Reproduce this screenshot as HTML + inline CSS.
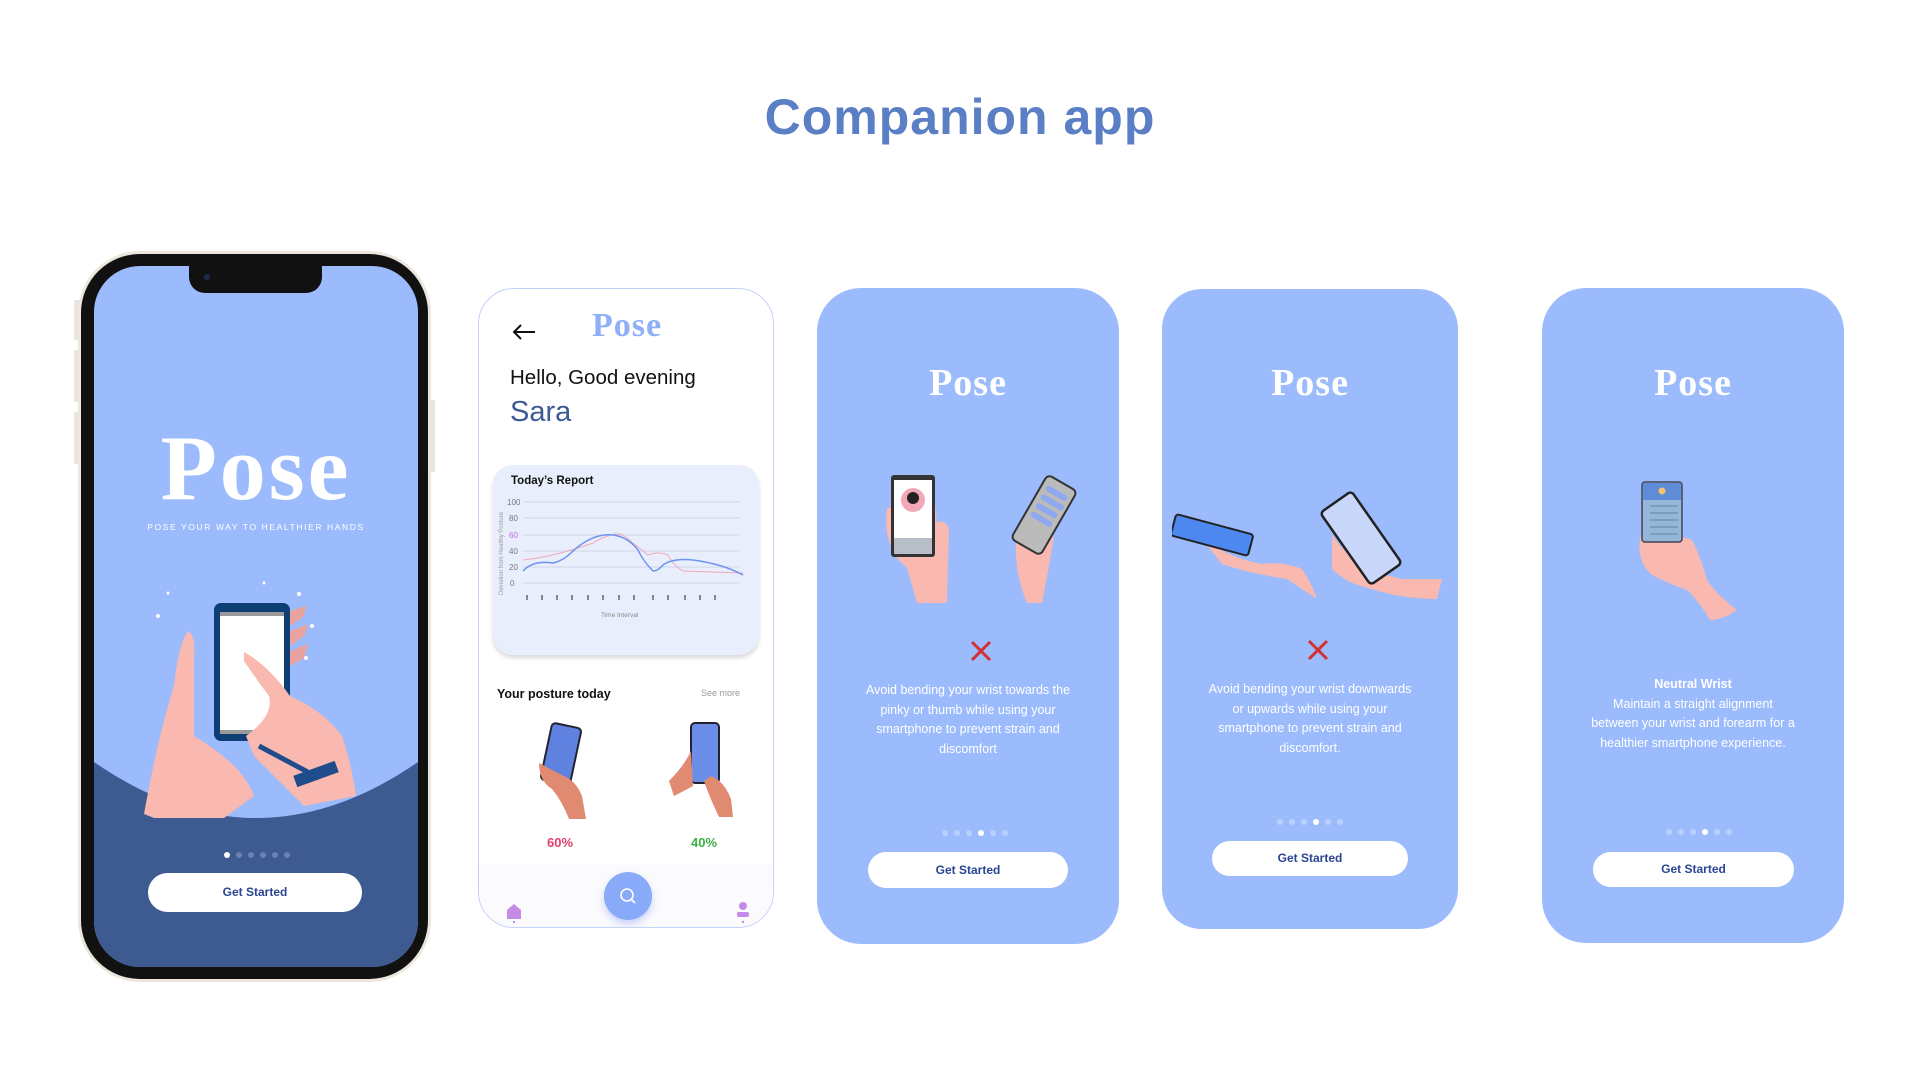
<!DOCTYPE html>
<html><head><meta charset="utf-8"><style>
*{margin:0;padding:0;box-sizing:border-box}
html,body{width:1920px;height:1080px;overflow:hidden}
body{background:#fff;position:relative;font-family:"Liberation Sans",sans-serif}
.a{position:absolute}
.logo{font-family:"Liberation Serif",serif;font-weight:bold;color:#fff;text-align:center;letter-spacing:1px}
.card{position:absolute;background:#9bbbfc;border-radius:44px;overflow:hidden}
.btn{position:absolute;background:#fff;border-radius:20px;color:#2a4593;font-weight:bold;font-size:12px;text-align:center}
.txt{position:absolute;color:#fff;text-align:center;font-size:12.5px;line-height:19.5px;white-space:nowrap}
.dots{position:absolute;display:flex;gap:6px}
.dots i{width:6px;height:6px;border-radius:50%;background:#b9cffd;display:block}
.dots i.on{background:#fff}
</style></head><body>
<div class="a" style="left:0;top:88px;width:1920px;text-align:center;font-size:50px;font-weight:bold;color:#5b7fc4;letter-spacing:1px">Companion app</div>

<!-- Phone 1 -->
<div class="a" style="left:74px;top:300px;width:6px;height:40px;background:#e9e4dc;border-radius:2px"></div>
<div class="a" style="left:74px;top:350px;width:6px;height:52px;background:#e9e4dc;border-radius:2px"></div>
<div class="a" style="left:74px;top:412px;width:6px;height:52px;background:#e9e4dc;border-radius:2px"></div>
<div class="a" style="left:429px;top:400px;width:6px;height:72px;background:#e9e4dc;border-radius:2px"></div>
<div class="a" style="left:78px;top:251px;width:353px;height:731px;border-radius:62px;background:#111;border:3px solid #ece6dc"></div>
<div class="a" style="left:94px;top:266px;width:324px;height:701px;border-radius:46px;background:#9bbbfc;overflow:hidden">
  <svg class="a" style="left:0;top:0" width="324" height="701">
    <path d="M0 496 Q162 608 324 496 L324 701 L0 701 Z" fill="#3d5b90"/>
    <path d="M50 548 Q64 470 80 420 Q84 380 94 365 Q102 370 100 392 L100 470 Q150 500 160 530 L130 552 L60 552 Z" fill="#f9b8b0"/>
    <rect x="120" y="337" width="76" height="138" rx="7" fill="#0d3f75"/>
    <rect x="126" y="348" width="64" height="118" fill="#fff"/>
    <rect x="126" y="346" width="64" height="4" fill="#999"/>
    <rect x="126" y="464" width="64" height="4" fill="#999"/>
    <path d="M196 345 L212 340 L210 350 L196 360 M196 365 L214 358 L210 370 L196 380 M196 385 L214 378 L210 392 L196 400" fill="#e8a3a0"/>
    <path d="M150 386 Q175 400 196 430 Q230 445 248 470 Q258 500 262 530 L210 540 Q180 510 160 490 L152 470 Q180 450 175 430 Q160 410 150 395 Z" fill="#f9b8b0"/>
    <path d="M165 480 L225 512" stroke="#1f4c8a" stroke-width="5"/>
    <rect x="200" y="502" width="44" height="12" fill="#1f4c8a" transform="rotate(-20 222 508)"/>
    <g fill="#fff"><circle cx="64" cy="350" r="2"/><circle cx="170" cy="317" r="1.5"/><circle cx="205" cy="328" r="2"/><circle cx="218" cy="360" r="2"/><circle cx="74" cy="327" r="1.5"/><circle cx="212" cy="392" r="2"/></g>
  </svg>
  <div class="a logo" style="left:0;top:152px;width:324px;font-size:92px;line-height:100px;letter-spacing:3px">Pose</div>
  <div class="a" style="left:0;top:256px;width:324px;text-align:center;color:#fff;font-size:8.5px;letter-spacing:1.6px">POSE YOUR WAY TO HEALTHIER HANDS</div>
  <div class="dots" style="left:130px;top:586px"><i class="on"></i><i style="background:#6a82b3"></i><i style="background:#6a82b3"></i><i style="background:#6a82b3"></i><i style="background:#6a82b3"></i><i style="background:#6a82b3"></i></div>
  <div class="btn" style="left:54px;top:607px;width:214px;height:39px;line-height:39px;border-radius:20px">Get Started</div>
</div>
<div class="a" style="left:189px;top:264px;width:133px;height:29px;background:#111;border-radius:0 0 16px 16px"></div>
<div class="a" style="left:204px;top:274px;width:6px;height:6px;border-radius:50%;background:#1c2c4c"></div>

<!-- Card 2 -->
<div class="a" style="left:478px;top:288px;width:296px;height:640px;border:1.5px solid #c3d3f7;border-radius:36px;background:#fff;overflow:hidden">
  <svg class="a" style="left:32px;top:34px" width="26" height="18"><path d="M24 9 H3 M10 2 L3 9 L10 16" stroke="#111" stroke-width="2" fill="none"/></svg>
  <div class="a logo" style="left:0;top:18px;width:296px;font-size:34px;color:#8fb0f8">Pose</div>
  <div class="a" style="left:31px;top:77px;font-size:20.5px;color:#111">Hello, Good evening</div>
  <div class="a" style="left:31px;top:107px;font-size:29px;color:#3d5a94">Sara</div>
  <div class="a" style="left:14px;top:176px;width:266px;height:190px;background:#e9eefc;border-radius:20px;box-shadow:0 3px 4px rgba(0,0,0,.15)">
    <div class="a" style="left:18px;top:10px;font-size:11.5px;font-weight:bold;color:#111">Today’s Report</div>
    <svg class="a" style="left:0;top:0" width="266" height="190">
      <g stroke="#cfd6e6" stroke-width="1"><line x1="30" y1="37" x2="246" y2="37"/><line x1="30" y1="53" x2="246" y2="53"/><line x1="30" y1="70" x2="246" y2="70"/><line x1="30" y1="86" x2="246" y2="86"/><line x1="30" y1="102" x2="246" y2="102"/><line x1="30" y1="118" x2="246" y2="118"/></g>
      <g font-size="8" fill="#777" font-family="Liberation Sans"><text x="14" y="40">100</text><text x="16" y="56">80</text><text x="16" y="73" fill="#c06ad8">60</text><text x="16" y="89">40</text><text x="16" y="105">20</text><text x="17" y="121">0</text></g>
      <path d="M30 95 Q60 92 100 78 Q120 66 130 70 Q140 78 155 90 Q165 86 175 90 Q182 102 190 106 L250 108" stroke="#f2a9b6" fill="none" stroke-width="1"/>
      <path d="M30 106 Q40 95 60 98 Q70 96 80 86 Q100 68 120 70 Q135 72 145 85 Q150 96 160 106 Q165 106 170 100 Q180 93 200 95 Q230 99 250 110" stroke="#6c93f2" fill="none" stroke-width="1.5"/>
      <g stroke="#222" stroke-width="1"><line x1="34" y1="130" x2="34" y2="135"/><line x1="49" y1="130" x2="49" y2="135"/><line x1="64" y1="130" x2="64" y2="135"/><line x1="79" y1="130" x2="79" y2="135"/><line x1="95" y1="130" x2="95" y2="135"/><line x1="110" y1="130" x2="110" y2="135"/><line x1="126" y1="130" x2="126" y2="135"/><line x1="141" y1="130" x2="141" y2="135"/><line x1="160" y1="130" x2="160" y2="135"/><line x1="175" y1="130" x2="175" y2="135"/><line x1="192" y1="130" x2="192" y2="135"/><line x1="207" y1="130" x2="207" y2="135"/><line x1="222" y1="130" x2="222" y2="135"/></g>
      <text x="108" y="152" font-size="6.5" fill="#888" font-family="Liberation Sans">Time Interval</text>
      <text x="0" y="0" font-size="6" fill="#999" font-family="Liberation Sans" transform="translate(10 130) rotate(-90)">Deviation from Healthy Posture</text>
    </svg>
  </div>
  <div class="a" style="left:18px;top:398px;font-size:12.5px;font-weight:bold;color:#111">Your posture today</div>
  <div class="a" style="left:222px;top:399px;font-size:9px;color:#999">See more</div>
  <svg class="a" style="left:55px;top:432px" width="70" height="100"><rect x="12" y="4" width="30" height="58" rx="4" fill="#5f82e0" stroke="#223" stroke-width="2" transform="rotate(12 27 33)"/><path d="M5 42 Q20 50 30 55 Q42 60 48 75 L52 98 L35 98 Q28 80 18 68 Q5 60 5 42Z" fill="#e08a72"/></svg>
  <svg class="a" style="left:180px;top:432px" width="84" height="100"><rect x="32" y="2" width="28" height="60" rx="4" fill="#6d8ee8" stroke="#223" stroke-width="2"/><path d="M10 60 Q25 45 32 30 L34 65 Q25 70 15 75Z M52 55 Q65 60 72 78 L74 96 L60 96 Q50 75 45 60Z" fill="#e08a72"/></svg>
  <div class="a" style="left:68px;top:546px;font-size:13px;font-weight:bold;color:#e0406a">60%</div>
  <div class="a" style="left:212px;top:546px;font-size:13px;font-weight:bold;color:#3cb043">40%</div>
  <div class="a" style="left:0;top:575px;width:296px;height:70px;background:#fbfbfd"></div>
  <div class="a" style="left:125px;top:583px;width:48px;height:48px;border-radius:50%;background:#89aaf8;box-shadow:0 4px 8px rgba(100,130,240,.35)"></div>
  <svg class="a" style="left:140px;top:598px" width="18" height="18"><circle cx="8" cy="8" r="6" stroke="#fff" stroke-width="1.6" fill="none"/><line x1="12.5" y1="12.5" x2="16" y2="16" stroke="#fff" stroke-width="1.6"/></svg>
  <svg class="a" style="left:26px;top:613px" width="18" height="22"><path d="M2 8 L9 2 L16 8 V17 H2Z" fill="#c58be8"/><circle cx="9" cy="20" r="1.2" fill="#c58be8"/></svg>
  <svg class="a" style="left:256px;top:612px" width="16" height="24"><circle cx="8" cy="5" r="4" fill="#c58be8"/><rect x="2" y="11" width="12" height="5" rx="2" fill="#c58be8"/><circle cx="8" cy="21" r="1.2" fill="#c58be8"/></svg>
</div>

<!-- Card 3 -->
<div class="card" style="left:817px;top:288px;width:302px;height:656px">
  <div class="a logo" style="left:0;top:73px;width:302px;font-size:38px">Pose</div>
  <svg class="a" style="left:60px;top:180px" width="200" height="135">
    <path d="M10 40 Q5 80 30 100 L40 135 L70 135 L72 60 Q66 50 60 55 L58 35 Z" fill="#f9b8b0"/>
    <rect x="14" y="7" width="44" height="82" rx="3" fill="#333"/><rect x="17" y="12" width="38" height="58" fill="#fff"/><circle cx="36" cy="32" r="12" fill="#f3a8b8"/><circle cx="36" cy="30" r="6" fill="#222"/><rect x="17" y="70" width="38" height="16" fill="#b8bec8"/>
    <path d="M140 60 Q135 100 150 135 L165 135 Q170 110 175 80 Q180 60 170 55 L150 45Z" fill="#f9b8b0"/>
    <rect x="150" y="10" width="34" height="74" rx="5" fill="#bbb" stroke="#333" stroke-width="2" transform="rotate(30 167 47)"/>
    <g stroke="#8fa9f0" stroke-width="6" stroke-linecap="round" transform="rotate(30 167 47)"><line x1="158" y1="22" x2="176" y2="22"/><line x1="158" y1="32" x2="178" y2="32"/><line x1="158" y1="42" x2="176" y2="42"/><line x1="158" y1="52" x2="176" y2="52"/></g>
  </svg>
  <svg class="a" style="left:153px;top:352px" width="22" height="22"><path d="M2 2 L20 20 M20 2 L2 20" stroke="#d3312f" stroke-width="3"/></svg>
  <div class="txt" style="left:0;top:393px;width:302px">Avoid bending your wrist towards the<br>pinky or thumb while using your<br>smartphone to prevent strain and<br>discomfort</div>
  <div class="dots" style="left:125px;top:542px"><i></i><i></i><i></i><i class="on"></i><i></i><i></i></div>
  <div class="btn" style="left:51px;top:564px;width:200px;height:36px;line-height:36px">Get Started</div>
</div>

<!-- Card 4 -->
<div class="card" style="left:1162px;top:289px;width:296px;height:640px;border-radius:40px">
  <div class="a logo" style="left:0;top:72px;width:296px;font-size:38px">Pose</div>
  <svg class="a" style="left:10px;top:200px" width="280" height="120">
    <path d="M30 50 Q60 70 90 75 Q110 72 130 80 Q140 95 145 110 Q130 100 115 90 Q80 85 50 75Z" fill="#f9b8b0"/>
    <rect x="0" y="35" width="80" height="22" rx="3" fill="#4d87f0" stroke="#222" stroke-width="2" transform="rotate(15 40 46)"/>
    <path d="M160 45 Q180 80 230 90 L270 90 L265 110 Q230 110 200 100 Q175 95 160 80Z" fill="#f9b8b0"/>
    <rect x="170" y="5" width="38" height="88" rx="4" fill="#c9d7fb" stroke="#222" stroke-width="2.5" transform="rotate(-35 189 49)"/>
  </svg>
  <svg class="a" style="left:145px;top:350px" width="22" height="22"><path d="M2 2 L20 20 M20 2 L2 20" stroke="#d3312f" stroke-width="3"/></svg>
  <div class="txt" style="left:0;top:391px;width:296px">Avoid bending your wrist downwards<br>or upwards while using your<br>smartphone to prevent strain and<br>discomfort.</div>
  <div class="dots" style="left:115px;top:530px"><i></i><i></i><i></i><i class="on"></i><i></i><i></i></div>
  <div class="btn" style="left:50px;top:552px;width:196px;height:35px;line-height:35px">Get Started</div>
</div>

<!-- Card 5 -->
<div class="card" style="left:1542px;top:288px;width:302px;height:655px">
  <div class="a logo" style="left:0;top:73px;width:302px;font-size:38px">Pose</div>
  <svg class="a" style="left:90px;top:192px" width="105" height="145">
    <path d="M10 50 Q2 80 20 95 Q40 105 55 110 Q70 125 78 140 Q90 140 105 130 Q85 115 75 100 Q70 80 60 60 L30 50Z" fill="#f9b8b0"/>
    <rect x="10" y="2" width="40" height="60" rx="3" fill="#94b6d8" stroke="#445" stroke-width="1.5"/><rect x="11" y="3" width="38" height="17" fill="#5e8cd6"/><circle cx="30" cy="11" r="3.5" fill="#f2c46b"/>
    <g stroke="#7d9cbd" stroke-width="2"><line x1="18" y1="26" x2="46" y2="26"/><line x1="18" y1="33" x2="46" y2="33"/><line x1="18" y1="40" x2="46" y2="40"/><line x1="18" y1="47" x2="46" y2="47"/><line x1="18" y1="54" x2="46" y2="54"/></g>
  </svg>
  <div class="txt" style="left:0;top:387px;width:302px"><b>Neutral Wrist</b><br>Maintain a straight alignment<br>between your wrist and forearm for a<br>healthier smartphone experience.</div>
  <div class="dots" style="left:124px;top:541px"><i></i><i></i><i></i><i class="on"></i><i></i><i></i></div>
  <div class="btn" style="left:51px;top:564px;width:201px;height:35px;line-height:35px">Get Started</div>
</div>
</body></html>
